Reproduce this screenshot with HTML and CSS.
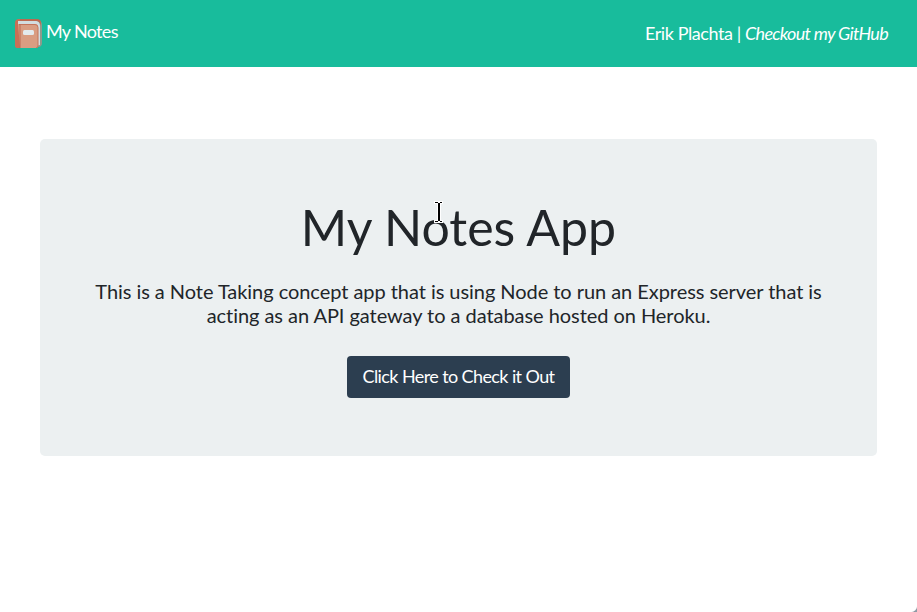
FILE: index.html
```html
<!DOCTYPE html>
<html lang="en">
<head>
<meta charset="utf-8">
<title>My Notes</title>
<link rel="stylesheet" href="styles.css">
</head>
<body>
<nav class="navbar">
  <a class="brand">
    <svg class="book" viewBox="0 0 27 29" aria-hidden="true">
      <path d="M3 1h20q4 1 4 5v18q0 3-3 4H5z" fill="#8f9a8c"/>
      <path d="M3 2h19q3 1 3 5v19l-4 1V6H3z" fill="#d3dcdf"/>
      <path d="M4 0h18q4 0 4 4v3q-1-5-5-5H4z" fill="#bc6950"/>
      <path d="M4 0Q0 0 0 4v23q0 2 3 2h2V5H3V2h2V0z" fill="#c96f56"/>
      <path d="M3 5h17q3 0 3 3v19q0 2-2 2H5z" fill="#d99d82"/>
      <path d="M4 5.500h16q3 0 3 3V27q0 2-2 2" fill="none" stroke="#c4745b"/>
      <path d="M5 5v24" stroke="#bd6a52"/>
      <rect x="8" y="11" width="11" height="5" rx="1.5" fill="#e3eaed"/>
    </svg>
    <span class="brand-text">My Notes</span>
  </a>
  <div class="author">Erik Plachta | <i class="github">Checkout my GitHub</i></div>
</nav>
<main class="jumbotron">
  <h1 class="title">My Notes App</h1>
  <p class="lead">This is a Note Taking concept app that is using Node to run an Express server that is acting as an API gateway to a database hosted on Heroku.</p>
  <a class="button">Click Here to Check it Out</a>
</main>
<svg class="cursor" viewBox="0 0 9 22" aria-hidden="true">
  <path d="M0 0h9v3H7v16h2v3H0v-3h3V3H0z" fill="#fff"/>
  <path d="M1 1h3v1H1zM6 1h2v1H6zM4 2h2v18H4zM1 20h3v1H1zM6 20h2v1H6z" fill="#000"/>
</svg>
<div class="corner"></div>
</body>
</html>
```

FILE: styles.css
```css
* { box-sizing: border-box; }
body {
  margin: 0;
  height: 612px;
  overflow: hidden;
  background: #fff;
  color: #212529;
  font-family: Lato, sans-serif;
}
.navbar {
  display: flex;
  justify-content: space-between;
  height: 67px;
  padding: 0 29px 0 15px;
  background: #18bc9c;
  color: #fff;
  font-size: 18px;
  line-height: 24px;
  white-space: nowrap;
}
.brand { display: flex; gap: 4px; padding-top: 19px; letter-spacing: -.67px; }
.book { width: 27px; height: 29px; }
.author { padding-top: 21px; letter-spacing: -.42px; }
.github { letter-spacing: -.7px; }
.jumbotron {
  display: flex;
  flex-direction: column;
  align-items: center;
  height: 317px;
  margin: 72px 40px 0;
  padding-top: 58px;
  border-radius: 5px;
  background: #ecf0f1;
  text-align: center;
}
.title {
  margin: 0;
  font-size: 50px;
  font-weight: 400;
  line-height: 60px;
}
.lead {
  width: 740px;
  margin: 22px 0 0;
  font-size: 20px;
  line-height: 24px;
  letter-spacing: -.05px;
}
.button {
  width: 223px;
  height: 42px;
  margin-top: 29px;
  border-radius: 4px;
  background: #2c3e50;
  color: #fff;
  font-size: 18px;
  line-height: 40px;
  letter-spacing: -.6px;
  white-space: nowrap;
}
.cursor { position: absolute; left: 434px; top: 201px; width: 9px; height: 22px; }
.corner {
  position: absolute;
  right: 0;
  bottom: 0;
  width: 6px;
  height: 6px;
  background: radial-gradient(circle at 0 0, transparent 5.500px, #8e9aa5 6.500px);
}
```
